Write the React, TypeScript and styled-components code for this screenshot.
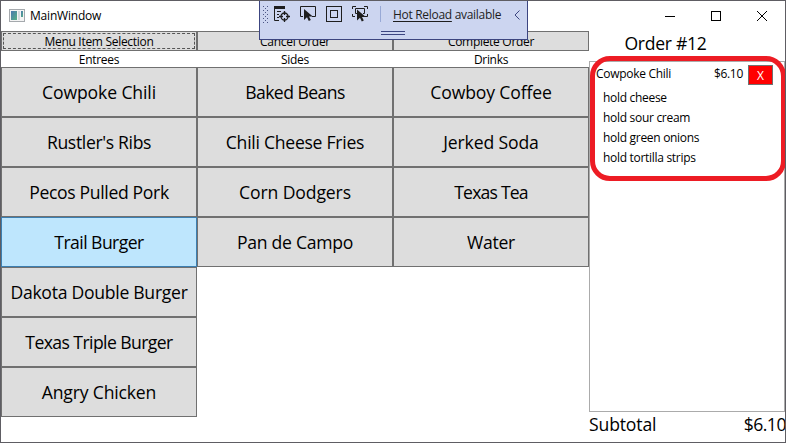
import React from 'react';
import styled, { createGlobalStyle } from 'styled-components';

const Global = createGlobalStyle`
  * { box-sizing: border-box; }
  body { margin: 0; background: #fff; }
`;

const Window = styled.main`
  position: relative;
  display: flex;
  flex-direction: column;
  width: 786px;
  height: 443px;
  overflow: hidden;
  border: 1px solid #5e5d63;
  background: #fff;
  color: #000;
  font-family: 'Open Sans', 'Noto Sans', sans-serif;
  font-size: 12px;
`;

const TitleBar = styled.header`
  display: flex;
  align-items: center;
  height: 30px;
  flex: none;
  padding-left: 8px;
`;

const Title = styled.h1`
  flex: 1;
  margin: 0 0 0 5px;
  font-size: 12px;
  font-weight: 400;
  letter-spacing: -0.2px;
  line-height: 28px;
`;

const CaptionButton = styled.button`
  display: grid;
  place-items: center;
  width: 46px;
  height: 29px;
  padding: 0;
  border: 0;
  background: none;
`;

const Body = styled.div`
  display: grid;
  grid-template-columns: 588px 196px;
  height: 411px;
`;

const MenuArea = styled.section`
  display: grid;
  grid-template-columns: repeat(3, 196px);
  align-content: start;
`;

const Column = styled.div`
  display: flex;
  flex-direction: column;
`;

const Text = styled.span<{ $spacing?: number }>`
  letter-spacing: ${p => p.$spacing ?? -0.3}px;
  white-space: nowrap;
`;

const CommandButton = styled.button<{ $focused?: boolean }>`
  position: relative;
  height: 20px;
  padding: 0;
  border: 1px solid #707070;
  background: #ddd;
  color: #000;
  font: inherit;
  line-height: 19px;
  ${p => p.$focused && `
    &::after {
      content: '';
      position: absolute;
      inset: 1px;
      border: 1px dashed #555;
    }
  `}
`;

const ColumnLabel = styled.div`
  height: 16px;
  line-height: 17px;
  text-align: center;
`;

const MenuButton = styled.button<{ $hot?: boolean }>`
  height: 50px;
  padding: 0;
  border: 1px solid ${p => (p.$hot ? '#3c7fb1' : '#707070')};
  background: ${p => (p.$hot ? '#bee6fd' : '#ddd')};
  color: #000;
  font: inherit;
  font-size: 17.6px;
  line-height: 48px;
`;

const OrderPanel = styled.aside`
  display: flex;
  flex-direction: column;
`;

const OrderTitle = styled.h2`
  height: 30px;
  margin: 0;
  padding-right: 43px;
  text-align: center;
  font-size: 17.6px;
  font-weight: 400;
  line-height: 25px;
`;

const OrderList = styled.div`
  height: 351px;
  border: 1px solid #ababab;
  padding: 3px 11px 0 6px;
`;

const OrderLine = styled.div`
  display: flex;
  height: 20px;
  line-height: 18px;
`;

const ItemName = styled.div`
  flex: 1;
`;

const RemoveButton = styled.button`
  width: 25px;
  height: 20px;
  margin-left: 5px;
  padding: 0;
  border: 1px solid #707070;
  background: #f00;
  color: #fff;
  font: inherit;
  line-height: 20px;
`;

const Notes = styled.ul`
  margin: 3px 0 0 7px;
  padding: 0;
  list-style: none;
  line-height: 20px;
`;

const Subtotal = styled.footer`
  display: flex;
  justify-content: space-between;
  margin-right: -1px;
  font-size: 17.6px;
  line-height: 25px;
`;

const Highlight = styled.div`
  position: absolute;
  left: 589px;
  top: 55px;
  width: 196px;
  height: 125px;
  border: 5px solid #ed1c24;
  border-radius: 20px;
  pointer-events: none;
`;

const DebugBar = styled.div`
  position: absolute;
  left: 258px;
  top: -1px;
  display: flex;
  width: 269px;
  height: 40px;
  border: 1px solid #3c4580;
  background: #ccd5f0;
  color: #1e1e1e;
`;

const HotReload = styled.div`
  margin: 4px 0 0 10px;
  line-height: 19px;
  white-space: nowrap;
  u { text-underline-offset: 2px; }
`;

type Item = [name: string, spacing: number];

const columns: { command: string; label: string; items: Item[] }[] = [
  {
    command: 'Menu Item Selection', label: 'Entrees',
    items: [
      ['Cowpoke Chili', -0.12], ["Rustler's Ribs", -0.35], ['Pecos Pulled Pork', -0.35], ['Trail Burger', -0.55],
      ['Dakota Double Burger', -0.28], ['Texas Triple Burger', -0.58], ['Angry Chicken', -0.18],
    ],
  },
  {
    command: 'Cancel Order', label: 'Sides',
    items: [['Baked Beans', -0.55], ['Chili Cheese Fries', -0.27], ['Corn Dodgers', -0.13], ['Pan de Campo', -0.27]],
  },
  {
    command: 'Complete Order', label: 'Drinks',
    items: [['Cowboy Coffee', -0.15], ['Jerked Soda', -0.14], ['Texas Tea', -0.8], ['Water', -0.24]],
  },
];

const notes = ['hold cheese', 'hold sour cream', 'hold green onions', 'hold tortilla strips'];

const AppIcon = () => (
  <svg width="16" height="14" viewBox="0 0 16 14" shapeRendering="crispEdges">
    <defs>
      <linearGradient id="pane" x1="0" y1="0" x2="1" y2="1">
        <stop offset="0" stopColor="#4a78b0" />
        <stop offset="1" stopColor="#58b184" />
      </linearGradient>
    </defs>
    <rect x=".5" y=".5" width="15" height="12" fill="#f4f4f4" stroke="#a5a9ad" />
    <rect x="2" y="2" width="6" height="9" fill="url(#pane)" />
    <rect x="9" y="2" width="2" height="9" fill="#d5dade" />
    <rect x="12" y="2" width="2" height="6" fill="url(#pane)" />
  </svg>
);

const Cursor = ({ x, y }: { x: number; y: number }) => (
  <path transform={`translate(${x} ${y})`} d="M0 0V11L3 8.3L4.8 12L6.8 11L5 7.6H8.8Z" fill="#1e1e1e" stroke="none" />
);

const DebugIcons = () => (
  <svg width="123" height="38" viewBox="260 1 123 38" fill="none" stroke="#1e1e1e">
    <g fill="#4c5685" stroke="none">
      {[6, 10, 14, 18, 22].map(y => (
        <React.Fragment key={y}>
          <rect x="263" y={y} width="1" height="1" />
          <rect x="267" y={y} width="1" height="1" />
          {y < 22 && <rect x="265" y={y + 2} width="1" height="1" />}
        </React.Fragment>
      ))}
    </g>
    <path d="M274 7.5H285" strokeWidth="3" />
    <path d="M274.5 6V20.5H279M277 11.5H281M277 14.5H279M277 17.5H279" />
    <circle cx="284.5" cy="16.5" r="3.5" strokeWidth="1.3" />
    <path d="M284.5 11V15M284.5 18V22M279 16.5H283M286 16.5H290" strokeWidth="1.3" />
    <path d="M303 16.5H300.5V6.5H315.5V16.5H312" />
    <Cursor x={304} y={9} />
    <rect x="326.5" y="6.5" width="15" height="15" />
    <rect x="330.5" y="10.5" width="7" height="7" />
    <path d="M352.5 9V6.5H356M364 6.5H367.5V9M352.5 14V16.5H355M364.5 16.5H367.5V14M357 13.5H355.5V8.5H364.5V13.5H363" />
    <Cursor x={357} y={9.5} />
    <path d="M380.5 6V22" stroke="#98a9d6" />
  </svg>
);

const BarHandle = styled.span`
  position: absolute;
  left: 121px;
  top: 30px;
  width: 24px;
  height: 4px;
  border: solid #3c4580;
  border-width: 1px 0;
`;

const Chevron = styled.svg`
  position: absolute;
  left: 254px;
  top: 9px;
`;

export default function App() {
  return (
    <Window>
      <Global />
      <TitleBar>
        <AppIcon />
        <Title>MainWindow</Title>
        <CaptionButton aria-label="Minimize">
          <svg width="10" height="10"><path d="M0 5.5H10" stroke="#000" /></svg>
        </CaptionButton>
        <CaptionButton aria-label="Maximize">
          <svg width="10" height="10"><rect x=".5" y=".5" width="9" height="9" fill="none" stroke="#000" /></svg>
        </CaptionButton>
        <CaptionButton aria-label="Close">
          <svg width="10" height="10"><path d="M0 0L10 10M10 0L0 10" stroke="#000" /></svg>
        </CaptionButton>
      </TitleBar>
      <Body>
        <MenuArea>
          {columns.map((c, i) => (
            <Column key={c.label}>
              <CommandButton $focused={i === 0}><Text>{c.command}</Text></CommandButton>
              <ColumnLabel><Text>{c.label}</Text></ColumnLabel>
              {c.items.map(([name, spacing]) => (
                <MenuButton key={name} $hot={name === 'Trail Burger'}><Text $spacing={spacing}>{name}</Text></MenuButton>
              ))}
            </Column>
          ))}
        </MenuArea>
        <OrderPanel>
          <OrderTitle><Text>Order #12</Text></OrderTitle>
          <OrderList>
            <OrderLine>
              <ItemName><Text>Cowpoke Chili</Text></ItemName>
              <Text>$6.10</Text>
              <RemoveButton>X</RemoveButton>
            </OrderLine>
            <Notes>{notes.map(n => <li key={n}><Text>{n}</Text></li>)}</Notes>
          </OrderList>
          <Subtotal><Text $spacing={-0.15}>Subtotal</Text><Text $spacing={-0.5}>$6.10</Text></Subtotal>
        </OrderPanel>
      </Body>
      <Highlight />
      <DebugBar>
        <DebugIcons />
        <HotReload><Text><u>Hot Reload</u> available</Text></HotReload>
        <BarHandle />
        <Chevron width="6" height="10"><path d="M5.5 .5L1 5L5.5 9.5" fill="none" stroke="#3c4580" /></Chevron>
      </DebugBar>
    </Window>
  );
}
